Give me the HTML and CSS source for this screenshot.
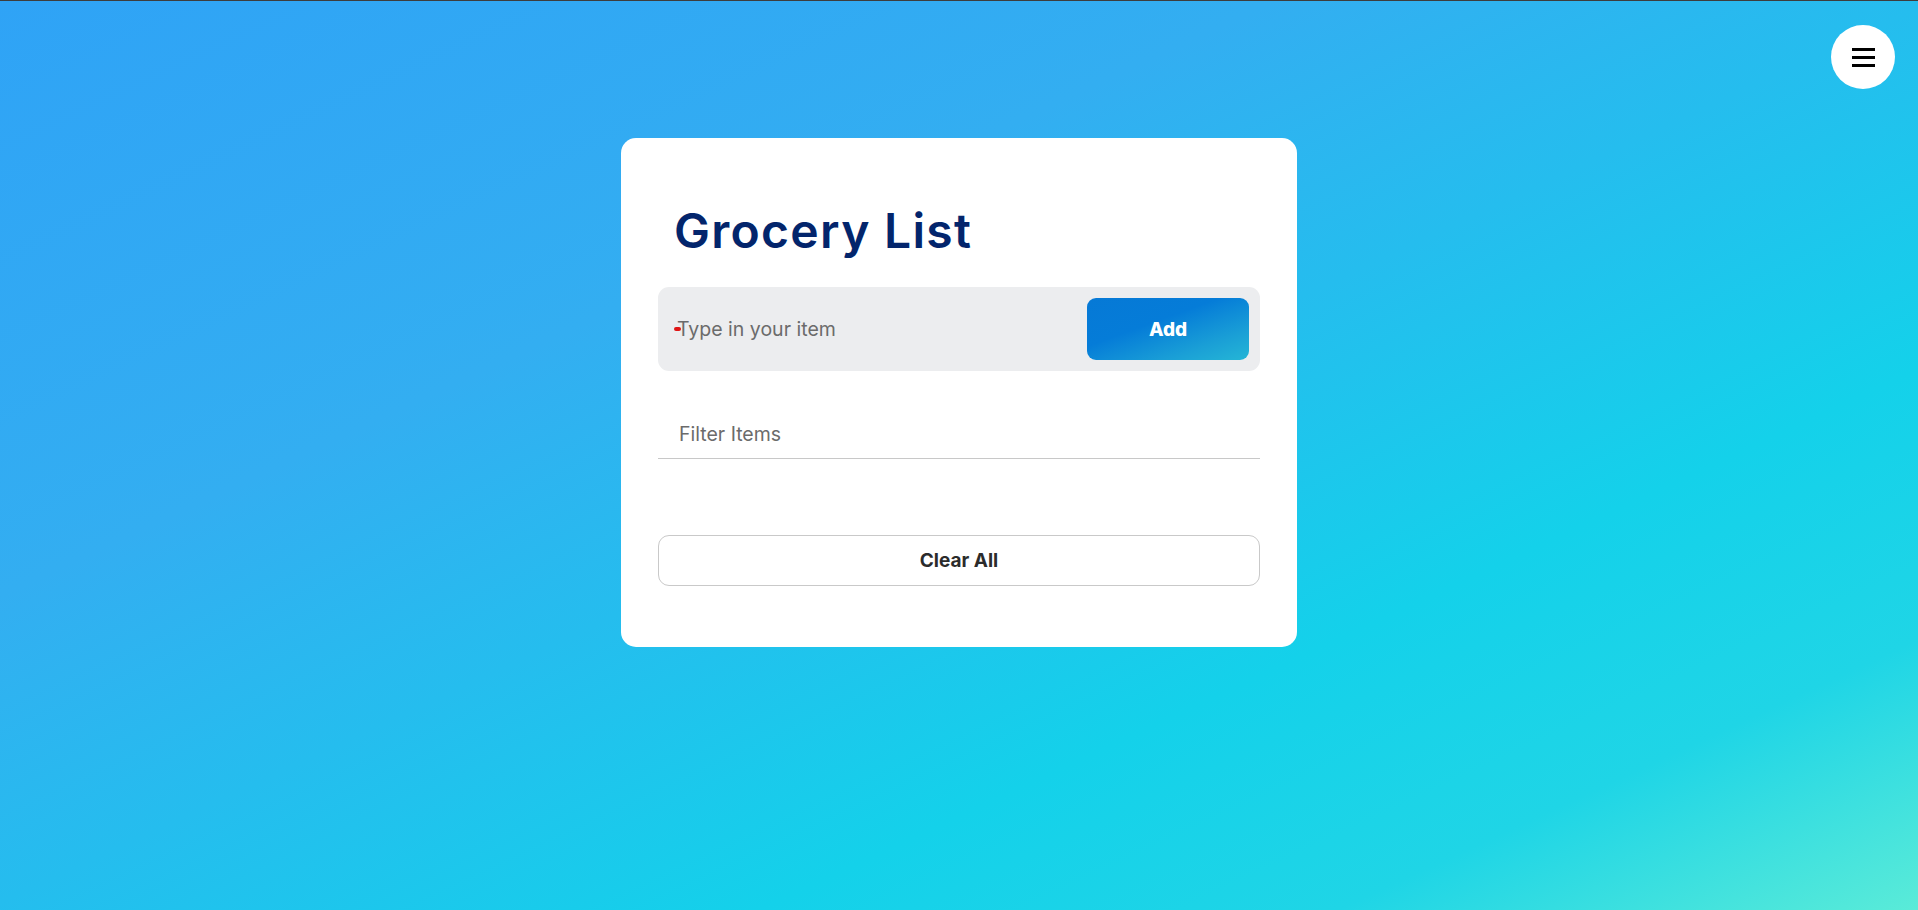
FILE: index.html
```html
<!DOCTYPE html>
<html lang="en">
<head>
<meta charset="utf-8">
<title>Grocery List</title>
<link rel="stylesheet" href="styles.css">
</head>
<body>
<div class="page">
  <button class="menu-btn" aria-label="Menu">
    <span class="bar"></span><span class="bar"></span><span class="bar"></span>
  </button>
  <main class="card">
    <h1 class="title">Grocery List</h1>
    <form class="add-form">
      <span class="mark"></span>
      <input class="item-input" type="text" placeholder="Type in your item">
      <button class="add-btn" type="button">Add</button>
    </form>
    <div class="filter">
      <input class="filter-input" type="text" placeholder="Filter Items">
    </div>
    <ul class="items"></ul>
    <button class="clear-btn" type="button">Clear All</button>
  </main>
</div>
</body>
</html>
```

FILE: styles.css
```css
* { box-sizing: border-box; }
html, body { margin: 0; padding: 0; height: 100%; }
body {
  font-family: "Inter", "Open Sans", sans-serif;
  border-top: 1px solid #3d3d3d;
  background: linear-gradient(155deg, #2fa3f6 0%, #33aef1 33%, #25bdee 50%, #14d1ea 70%, #1fd5e6 85%, #5aebd8 100%);
  background-attachment: fixed;
  min-height: 910px;
}
.page {
  padding-top: 137px;
}
.menu-btn {
  position: absolute;
  top: 25px;
  right: 23px;
  width: 64px;
  height: 64px;
  border-radius: 50%;
  border: none;
  background: #fff;
  display: flex;
  flex-direction: column;
  align-items: center;
  justify-content: center;
  gap: 5px;
  padding: 0;
  cursor: pointer;
}
.bar {
  display: block;
  width: 23px;
  height: 3px;
  background: #000;
}
.card {
  width: 676px;
  margin: 0 auto;
  background: #fff;
  border-radius: 15px;
  padding: 63px 37px 61px;
}
.title {
  margin: 2px 0 28px;
  padding-left: 16px;
  font-size: 48px;
  line-height: 56px;
  font-weight: 600;
  color: #03256c;
  letter-spacing: 1.3px;
}
.add-form {
  position: relative;
  display: flex;
  align-items: center;
  height: 84px;
  background: #ecedef;
  border-radius: 11px;
  padding: 11px 11px 11px 19px;
  margin: 0;
}
.mark {
  position: absolute;
  left: 16px;
  top: 40px;
  width: 7px;
  height: 4px;
  border-radius: 2px;
  background: #e01515;
}
.item-input {
  flex: 1;
  border: none;
  background: transparent;
  font-family: inherit;
  font-size: 19.5px;
  color: #333;
  outline: none;
  padding: 0;
}
.item-input::placeholder { color: #6b6b6b; }
.add-btn {
  width: 162px;
  height: 62px;
  border: none;
  border-radius: 9px;
  background: linear-gradient(160deg, #0679d6 0%, #057cd8 40%, #1a9fd6 75%, #25b6d6 100%);
  color: #fff;
  font-family: inherit;
  font-size: 19px;
  font-weight: 800;
  cursor: pointer;
}
.filter {
  margin-top: 38px;
}
.filter-input {
  display: block;
  width: 100%;
  height: 50px;
  border: none;
  border-bottom: 1px solid #c8c8c8;
  background: transparent;
  font-family: inherit;
  font-size: 19.5px;
  padding: 0 0 0 21px;
  outline: none;
}
.filter-input::placeholder { color: #6b6b6b; }
.items {
  list-style: none;
  margin: 0;
  padding: 0;
  height: 76px;
}
.clear-btn {
  display: block;
  width: 100%;
  height: 51px;
  border: 1px solid #c9c9c9;
  border-radius: 11px;
  background: #fff;
  font-family: inherit;
  font-size: 19px;
  font-weight: 700;
  color: #2b2b2b;
  cursor: pointer;
}
```
